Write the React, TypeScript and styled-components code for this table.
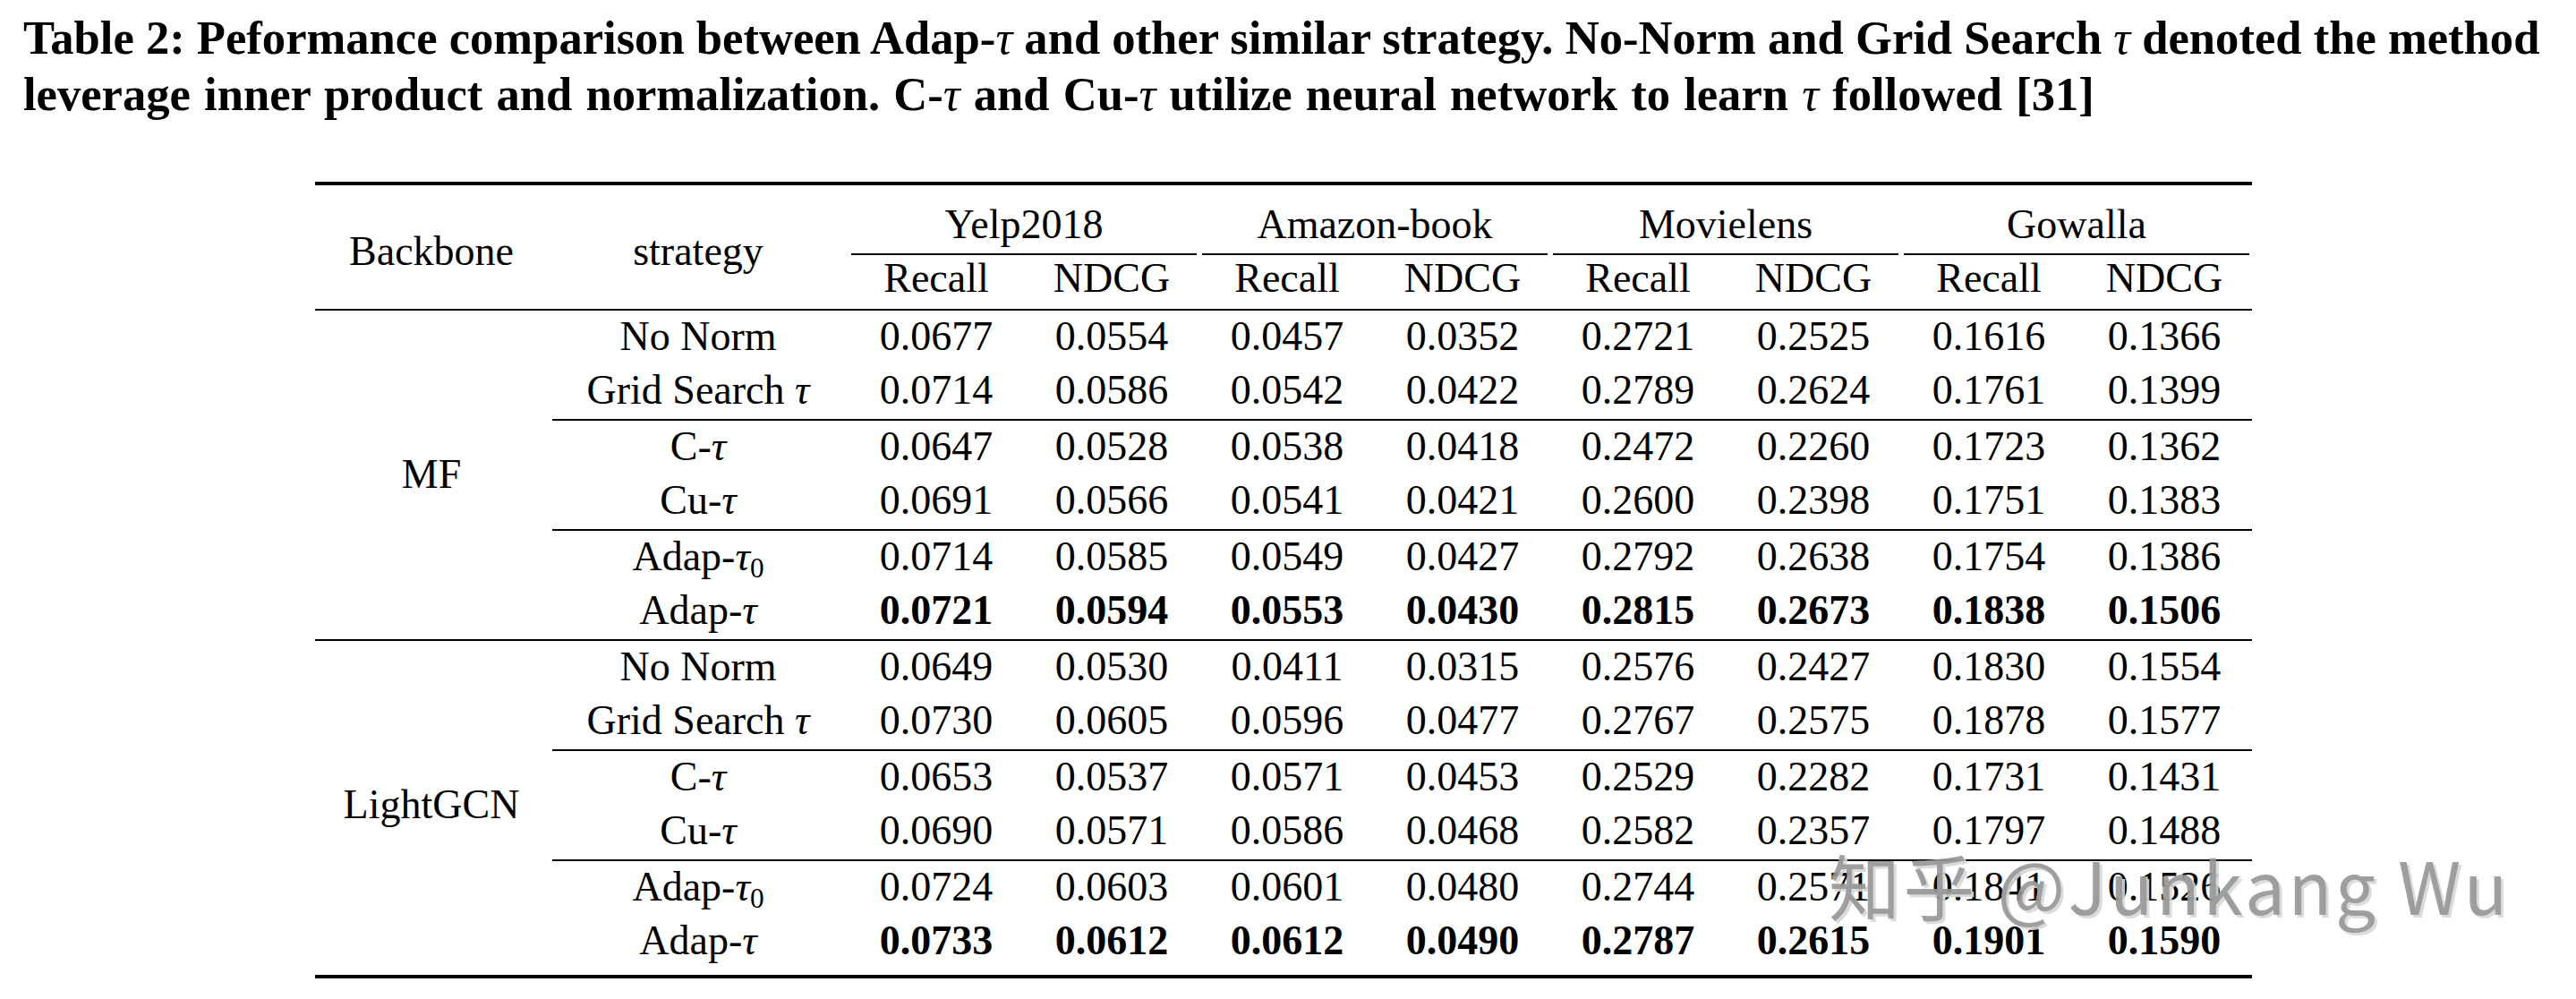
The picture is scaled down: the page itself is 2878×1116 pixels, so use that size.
import { Fragment, ReactNode } from "react";
import styled, { createGlobalStyle } from "styled-components";

const GlobalStyle = createGlobalStyle`
  html, body {
    margin: 0;
    padding: 0;
    background: #fff;
  }
  body {
    font-family: "Liberation Serif", "Times New Roman", serif;
    color: #000;
  }
`;

const Page = styled.div`
  position: relative;
  width: 2878px;
  height: 1116px;
  overflow: hidden;
  background: #fff;
`;

const Caption = styled.div`
  padding: 11px 0 0 26px;
  font-size: 52.6px;
  line-height: 63px;
  font-weight: 700;
  white-space: nowrap;
`;

const CaptionLine = styled.div<{ $spacing?: number }>`
  word-spacing: ${(p) => p.$spacing ?? 0}px;
`;

const Tau = styled.i`
  font-weight: 400;
  font-style: italic;
`;

const Sub = styled.sub`
  font-size: 0.68em;
  line-height: 0;
  vertical-align: -0.24em;
  font-style: normal;
`;

const TableBox = styled.div`
  padding: 66px 0 0 352px;
`;

const Table = styled.table`
  border-collapse: separate;
  border-spacing: 0;
  table-layout: fixed;
  width: 2164px;
  font-size: 46px;
`;

const RuleCell = styled.td<{ $pad?: number }>`
  padding: ${(p) => p.$pad ?? 0}px 0 0;
  line-height: 0;
  font-size: 0;
`;

const Rule = styled.div<{ $weight: number; $trimLeft?: number; $trimRight?: number }>`
  height: ${(p) => p.$weight}px;
  margin: 0 ${(p) => p.$trimRight ?? 0}px 0 ${(p) => p.$trimLeft ?? 0}px;
  background: #000;
`;

const HeadLabel = styled.th`
  padding: 10px 0 0;
  line-height: 60px;
  font-weight: 400;
  text-align: center;
  vertical-align: middle;
`;

const GroupHead = styled.th`
  padding: 14px 0 2px;
  line-height: 60px;
  font-weight: 400;
  text-align: center;
`;

const MetricHead = styled.th`
  padding: 0 0 7px;
  line-height: 52px;
  font-weight: 400;
  text-align: center;
`;

const BackboneCell = styled.td`
  padding: 0;
  line-height: 60px;
  text-align: center;
  vertical-align: middle;
`;

const Cell = styled.td<{ $bold?: boolean }>`
  padding: 0 0 3px;
  line-height: 57px;
  text-align: center;
  white-space: nowrap;
  font-weight: ${(p) => (p.$bold ? 700 : 400)};
`;

const Watermark = styled.div`
  position: absolute;
  left: 2043px;
  top: 947px;
  font-family: "Noto Sans CJK SC", "Noto Sans", sans-serif;
  font-size: 80px;
  line-height: 80px;
  letter-spacing: 3.5px;
  color: rgba(150, 150, 150, 0.9);
  text-shadow: 3px 3px 0 rgba(215, 215, 215, 0.9);
  white-space: nowrap;
  pointer-events: none;
`;

type Row = { label: ReactNode; values: string[]; bold?: boolean };
type Group = { backbone: string; blocks: Row[][] };

const datasets = ["Yelp2018", "Amazon-book", "Movielens", "Gowalla"];

const noNorm = "No Norm";
const grid = (
  <>
    Grid Search <Tau>τ</Tau>
  </>
);
const cTau = (
  <>
    C-<Tau>τ</Tau>
  </>
);
const cuTau = (
  <>
    Cu-<Tau>τ</Tau>
  </>
);
const adap0 = (
  <>
    Adap-<Tau>τ</Tau>
    <Sub>0</Sub>
  </>
);
const adap = (
  <>
    Adap-<Tau>τ</Tau>
  </>
);

const groups: Group[] = [
  {
    backbone: "MF",
    blocks: [
      [
        { label: noNorm, values: ["0.0677", "0.0554", "0.0457", "0.0352", "0.2721", "0.2525", "0.1616", "0.1366"] },
        { label: grid, values: ["0.0714", "0.0586", "0.0542", "0.0422", "0.2789", "0.2624", "0.1761", "0.1399"] },
      ],
      [
        { label: cTau, values: ["0.0647", "0.0528", "0.0538", "0.0418", "0.2472", "0.2260", "0.1723", "0.1362"] },
        { label: cuTau, values: ["0.0691", "0.0566", "0.0541", "0.0421", "0.2600", "0.2398", "0.1751", "0.1383"] },
      ],
      [
        { label: adap0, values: ["0.0714", "0.0585", "0.0549", "0.0427", "0.2792", "0.2638", "0.1754", "0.1386"] },
        { label: adap, bold: true, values: ["0.0721", "0.0594", "0.0553", "0.0430", "0.2815", "0.2673", "0.1838", "0.1506"] },
      ],
    ],
  },
  {
    backbone: "LightGCN",
    blocks: [
      [
        { label: noNorm, values: ["0.0649", "0.0530", "0.0411", "0.0315", "0.2576", "0.2427", "0.1830", "0.1554"] },
        { label: grid, values: ["0.0730", "0.0605", "0.0596", "0.0477", "0.2767", "0.2575", "0.1878", "0.1577"] },
      ],
      [
        { label: cTau, values: ["0.0653", "0.0537", "0.0571", "0.0453", "0.2529", "0.2282", "0.1731", "0.1431"] },
        { label: cuTau, values: ["0.0690", "0.0571", "0.0586", "0.0468", "0.2582", "0.2357", "0.1797", "0.1488"] },
      ],
      [
        { label: adap0, values: ["0.0724", "0.0603", "0.0601", "0.0480", "0.2744", "0.2571", "0.1841", "0.1526"] },
        { label: adap, bold: true, values: ["0.0733", "0.0612", "0.0612", "0.0490", "0.2787", "0.2615", "0.1901", "0.1590"] },
      ],
    ],
  },
];

const GroupRows = ({ group }: { group: Group }) => {
  const rowCount = group.blocks.reduce((n, b) => n + b.length, 0) + group.blocks.length - 1;
  return (
    <>
      {group.blocks.map((block, bi) => (
        <Fragment key={bi}>
          {bi > 0 && (
            <tr>
              <RuleCell colSpan={9} $pad={1}>
                <Rule $weight={2} $trimLeft={5} />
              </RuleCell>
            </tr>
          )}
          {block.map((row, ri) => (
            <tr key={ri}>
              {bi === 0 && ri === 0 && <BackboneCell rowSpan={rowCount}>{group.backbone}</BackboneCell>}
              <Cell>{row.label}</Cell>
              {row.values.map((v, vi) => (
                <Cell key={vi} $bold={row.bold}>
                  {v}
                </Cell>
              ))}
            </tr>
          ))}
        </Fragment>
      ))}
    </>
  );
};

const App = () => {
  return (
    <Page>
      <GlobalStyle />
      <Caption>
        <CaptionLine>
          Table 2: Peformance comparison between Adap-<Tau>τ</Tau> and other similar strategy. No-Norm and Grid
          Search <Tau>τ</Tau> denoted the method
        </CaptionLine>
        <CaptionLine $spacing={2}>
          leverage inner product and normalization. C-<Tau>τ</Tau> and Cu-<Tau>τ</Tau> utilize neural network to
          learn <Tau>τ</Tau> followed [31]
        </CaptionLine>
      </Caption>
      <TableBox>
        <Table>
          <colgroup>
            <col style={{ width: 260 }} />
            <col style={{ width: 336 }} />
            {Array.from({ length: 8 }).map((_, i) => (
              <col key={i} style={{ width: 196 }} />
            ))}
          </colgroup>
          <thead>
            <tr>
              <RuleCell colSpan={10}>
                <Rule $weight={4} />
              </RuleCell>
            </tr>
            <tr>
              <HeadLabel rowSpan={3}>Backbone</HeadLabel>
              <HeadLabel rowSpan={3}>strategy</HeadLabel>
              {datasets.map((d) => (
                <GroupHead key={d} colSpan={2}>
                  {d}
                </GroupHead>
              ))}
            </tr>
            <tr>
              {datasets.map((d) => (
                <RuleCell key={d} colSpan={2}>
                  <Rule $weight={2} $trimLeft={3} $trimRight={3} />
                </RuleCell>
              ))}
            </tr>
            <tr>
              {datasets.map((d) => (
                <Fragment key={d}>
                  <MetricHead>Recall</MetricHead>
                  <MetricHead>NDCG</MetricHead>
                </Fragment>
              ))}
            </tr>
            <tr>
              <RuleCell colSpan={10} $pad={1}>
                <Rule $weight={2} />
              </RuleCell>
            </tr>
          </thead>
          <tbody>
            <GroupRows group={groups[0]} />
            <tr>
              <RuleCell colSpan={10} $pad={1}>
                <Rule $weight={2} />
              </RuleCell>
            </tr>
            <GroupRows group={groups[1]} />
            <tr>
              <RuleCell colSpan={10} $pad={7}>
                <Rule $weight={4} />
              </RuleCell>
            </tr>
          </tbody>
        </Table>
      </TableBox>
      <Watermark>知乎 @Junkang Wu</Watermark>
    </Page>
  );
};

export default App;
